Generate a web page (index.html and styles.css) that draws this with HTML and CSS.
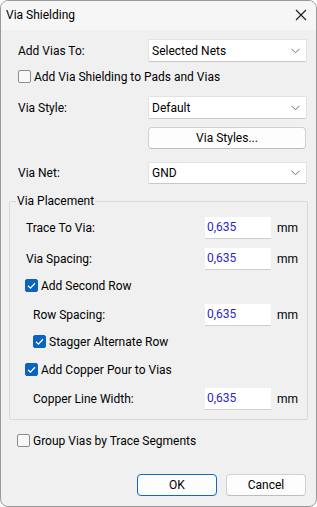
FILE: index.html
```html
<!DOCTYPE html>
<html>
<head>
<meta charset="utf-8">
<link rel="stylesheet" href="styles.css">
</head>
<body>
<div class="window">
  <div class="titlebar">
    <span class="title">Via Shielding</span>
    <svg class="close" width="12" height="12" viewBox="0 0 12 12"><path d="M1 1 L11 11 M11 1 L1 11" stroke="#1a1a1a" stroke-width="1.1" fill="none"/></svg>
  </div>
  <div class="content">
    <div class="row r-combo1">
      <span class="label">Add Vias To:</span>
      <div class="combo"><span>Selected Nets</span><svg class="chev" width="9" height="6" viewBox="0 0 9 6"><path d="M0.5 0.8 L4.5 4.8 L8.5 0.8" stroke="#6a6a6a" stroke-width="1" fill="none"/></svg></div>
    </div>
    <div class="row chkrow r-chk1">
      <span class="chk"></span><span class="chklabel">Add Via Shielding to Pads and Vias</span>
    </div>
    <div class="row r-combo2">
      <span class="label">Via Style:</span>
      <div class="combo"><span>Default</span><svg class="chev" width="9" height="6" viewBox="0 0 9 6"><path d="M0.5 0.8 L4.5 4.8 L8.5 0.8" stroke="#6a6a6a" stroke-width="1" fill="none"/></svg></div>
    </div>
    <div class="row r-btn">
      <span class="label"></span>
      <div class="btn wide">Via Styles...</div>
    </div>
    <div class="row r-combo3">
      <span class="label">Via Net:</span>
      <div class="combo"><span>GND</span><svg class="chev" width="9" height="6" viewBox="0 0 9 6"><path d="M0.5 0.8 L4.5 4.8 L8.5 0.8" stroke="#6a6a6a" stroke-width="1" fill="none"/></svg></div>
    </div>
    <fieldset class="group">
      <legend>Via Placement</legend>
      <div class="grow g1 lvl1">
        <span class="label">Trace To Via:</span>
        <span class="num">0,635</span><span class="unit">mm</span>
      </div>
      <div class="grow g2 lvl1">
        <span class="label">Via Spacing:</span>
        <span class="num">0,635</span><span class="unit">mm</span>
      </div>
      <div class="grow chkrow g3 lvl0">
        <span class="chk on"><svg width="13" height="13" viewBox="0 0 13 13"><path d="M3 6.8 L5.4 9.1 L10 4.3" stroke="#fff" stroke-width="1.3" fill="none"/></svg></span><span class="chklabel">Add Second Row</span>
      </div>
      <div class="grow g4 lvl2">
        <span class="label">Row Spacing:</span>
        <span class="num">0,635</span><span class="unit">mm</span>
      </div>
      <div class="grow chkrow g5 lvl2">
        <span class="chk on"><svg width="13" height="13" viewBox="0 0 13 13"><path d="M3 6.8 L5.4 9.1 L10 4.3" stroke="#fff" stroke-width="1.3" fill="none"/></svg></span><span class="chklabel">Stagger Alternate Row</span>
      </div>
      <div class="grow chkrow g6 lvl0">
        <span class="chk on"><svg width="13" height="13" viewBox="0 0 13 13"><path d="M3 6.8 L5.4 9.1 L10 4.3" stroke="#fff" stroke-width="1.3" fill="none"/></svg></span><span class="chklabel">Add Copper Pour to Vias</span>
      </div>
      <div class="grow g7 lvl2">
        <span class="label">Copper Line Width:</span>
        <span class="num">0,635</span><span class="unit">mm</span>
      </div>
    </fieldset>
    <div class="row chkrow r-chk2">
      <span class="chk"></span><span class="chklabel">Group Vias by Trace Segments</span>
    </div>
    <div class="buttons">
      <div class="btn ok">OK</div>
      <div class="btn">Cancel</div>
    </div>
  </div>
</div>
</body>
</html>
```
FILE: styles.css
```css
html, body {
  margin: 0;
  padding: 0;
  background: #ffffff;
}
body {
  font-family: Roboto, "Noto Sans", sans-serif;
  font-size: 12px;
  color: #000;
}
.window {
  width: 317px;
  height: 507px;
  box-sizing: border-box;
  border: 1px solid #9a9a9a;
  border-radius: 8px;
  background: #f0f0f0;
  overflow: hidden;
}
.titlebar {
  height: 27px;
  background: #f6f6f6;
  display: flex;
  align-items: center;
  justify-content: space-between;
  padding: 0 9px 2px 5px;
}
.title {
  line-height: 16px;
}
.close {
  display: block;
}
.content {
  padding: 0 8px;
  display: flex;
  flex-direction: column;
}
.row {
  display: flex;
  align-items: center;
  padding-left: 9px;
  padding-right: 1px;
}
.label {
  flex: 1;
  line-height: 16px;
}
.r-combo1 { margin-top: 9px; height: 23px; }
.r-chk1 { margin-top: 6px; height: 17px; }
.r-combo2 { margin-top: 11px; height: 23px; }
.r-btn { margin-top: 8px; height: 22px; padding-right: 2px; }
.r-combo3 { margin-top: 13px; height: 22px; }
.combo {
  width: 159px;
  height: 100%;
  box-sizing: border-box;
  background: #fff;
  border: 1px solid #e2e2e2;
  border-bottom-color: #c8c8c8;
  border-radius: 2px;
  display: flex;
  align-items: center;
  justify-content: space-between;
  padding: 0 6px 0 3px;
}
.chev { display: block; }
.chkrow .chk {
  width: 13px;
  height: 13px;
  box-sizing: border-box;
  border: 1px solid #8c8c8c;
  border-radius: 2px;
  background: #f8f8f8;
  margin-right: 3px;
  flex: none;
}
.chk.on {
  background: #0b63c0;
  border-color: #0b63c0;
}
.chk.on svg {
  display: block;
  margin: -1px;
}
.chklabel { line-height: 16px; }
.btn {
  box-sizing: border-box;
  height: 22px;
  background: #fdfdfd;
  border: 1px solid #d0d0d0;
  border-bottom-color: #bdbdbd;
  border-radius: 4px;
  display: flex;
  align-items: center;
  justify-content: center;
  width: 80px;
}
.btn.wide { width: 158px; }
.btn.ok {
  border: 1px solid #0f68c2;
}
.group {
  margin: 9px 0 0 0;
  padding: 0 0 9px 0;
  border: 1px solid #d8d8d8;
  border-radius: 2px;
  min-width: 0;
}
.group legend {
  margin-left: 6px;
  padding: 0 1px;
  line-height: 16px;
  height: 16px;
}
.grow {
  display: flex;
  align-items: center;
}
.lvl0 { padding-left: 15px; }
.lvl1 { padding-left: 16px; }
.lvl2 { padding-left: 23px; }
.g1 { margin-top: 8px; height: 22px; }
.g2 { margin-top: 9px; height: 22px; }
.g3 { margin-top: 7px; height: 17px; }
.g4 { margin-top: 10px; height: 22px; }
.g5 { margin-top: 7px; height: 17px; }
.g6 { margin-top: 11px; height: 17px; }
.g7 { margin-top: 10px; height: 22px; }
.num {
  width: 66px;
  height: 22px;
  box-sizing: border-box;
  background: #fff;
  border-bottom: 1px solid #d0d0d0;
  color: #2a1fd0;
  padding-left: 2px;
  line-height: 21px;
}
.unit {
  width: 30px;
  margin-left: 6px;
}
.r-chk2 { margin-top: 12px; height: 17px; padding-left: 8px; }
.buttons {
  display: flex;
  justify-content: flex-end;
  gap: 9px;
  margin-top: 25px;
  padding-right: 2px;
}
```
